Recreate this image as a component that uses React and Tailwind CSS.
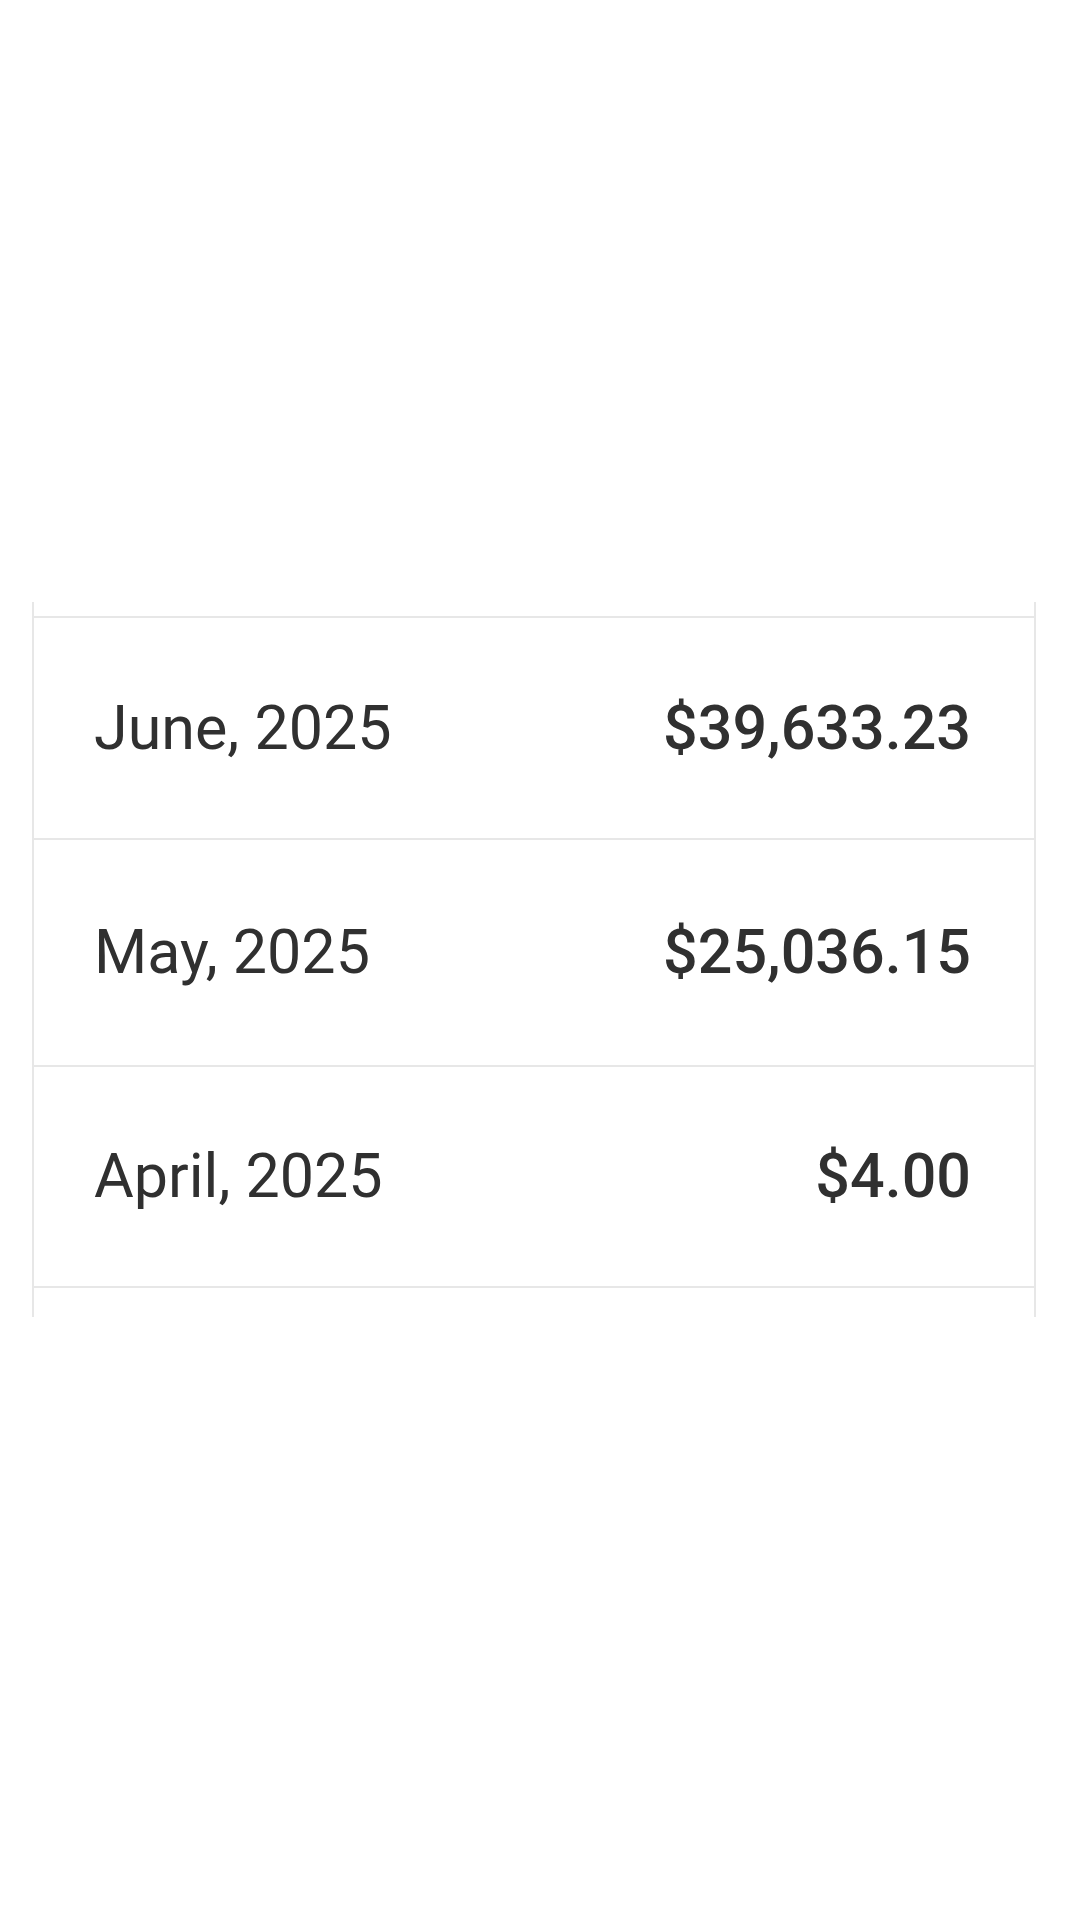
export default function App() {
  const rows = [
    { label: "June, 2025", amount: "$39,633.23", h: "h-[222px]" },
    { label: "May, 2025", amount: "$25,036.15", h: "h-[227px]" },
    { label: "April, 2025", amount: "$4.00", h: "h-[221px]" },
  ];
  return (
    <div className="w-[1080px] h-[1920px] bg-white pt-[602px] pl-[32px] font-['Roboto',sans-serif]">
      <div className="w-[1004px] h-[715px] border-x-2 border-[#e7e7e7] pt-[14px] flex flex-col">
        {rows.map((r) => (
          <div
            key={r.label}
            className={`${r.h} shrink-0 border-t-2 border-[#e7e7e7] flex items-center justify-between pl-[60px] pr-[63px] text-[#303030] text-[61px] leading-none`}
          >
            <span className="font-normal">{r.label}</span>
            <span className="font-medium">{r.amount}</span>
          </div>
        ))}
        <div className="border-t-2 border-[#e7e7e7]" />
      </div>
    </div>
  );
}
